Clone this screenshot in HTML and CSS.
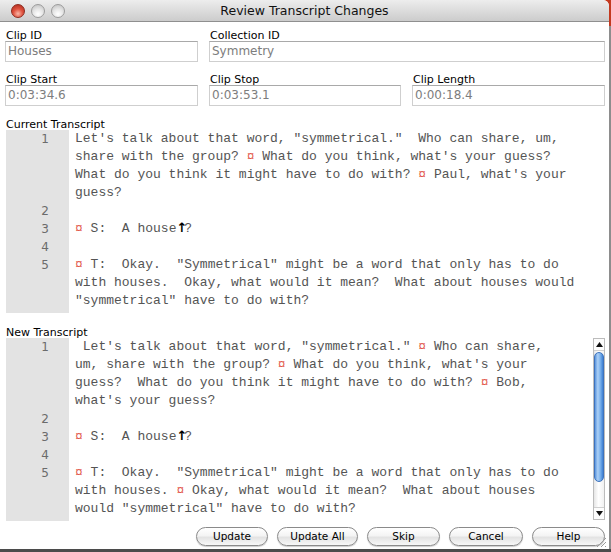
FILE: index.html
```html
<!DOCTYPE html>
<html>
<head>
<meta charset="utf-8">
<title>Review Transcript Changes</title>
<link rel="stylesheet" href="styles.css">
</head>
<body>
<div class="window">
  <div class="titlebar">
    <div class="lights">
      <span class="light red"></span>
      <span class="light"></span>
      <span class="light"></span>
    </div>
    <div class="title">Review Transcript Changes</div>
  </div>

  <div class="content">
    <div class="row row-2">
      <div class="field">
        <div class="label">Clip ID</div>
        <div class="box">Houses</div>
      </div>
      <div class="field">
        <div class="label">Collection ID</div>
        <div class="box">Symmetry</div>
      </div>
    </div>

    <div class="row row-3">
      <div class="field">
        <div class="label">Clip Start</div>
        <div class="box">0:03:34.6</div>
      </div>
      <div class="field">
        <div class="label">Clip Stop</div>
        <div class="box">0:03:53.1</div>
      </div>
      <div class="field">
        <div class="label">Clip Length</div>
        <div class="box">0:00:18.4</div>
      </div>
    </div>

    <div class="label section">Current Transcript</div>
    <div class="txwrap">
      <div class="tx">
        <div class="line"><div class="num">1</div><div class="txt">Let's talk about that word, "symmetrical."  Who can share, um,
share with the group? <span class="mk">¤</span> What do you think, what's your guess?
What do you think it might have to do with? <span class="mk">¤</span> Paul, what's your
guess?</div></div>
        <div class="line"><div class="num">2</div><div class="txt"></div></div>
        <div class="line"><div class="num">3</div><div class="txt"><span class="mk">¤</span> S:  A house<span class="up">↑</span>?</div></div>
        <div class="line"><div class="num">4</div><div class="txt"></div></div>
        <div class="line"><div class="num">5</div><div class="txt"><span class="mk">¤</span> T:  Okay.  "Symmetrical" might be a word that only has to do
with houses.  Okay, what would it mean?  What about houses would
"symmetrical" have to do with?</div></div>
      </div>
    </div>

    <div class="label section section-new">New Transcript</div>
    <div class="txwrap">
      <div class="tx">
        <div class="line"><div class="num">1</div><div class="txt"> Let's talk about that word, "symmetrical." <span class="mk">¤</span> Who can share,
um, share with the group? <span class="mk">¤</span> What do you think, what's your
guess?  What do you think it might have to do with? <span class="mk">¤</span> Bob,
what's your guess?</div></div>
        <div class="line"><div class="num">2</div><div class="txt"></div></div>
        <div class="line"><div class="num">3</div><div class="txt"><span class="mk">¤</span> S:  A house<span class="up">↑</span>?</div></div>
        <div class="line"><div class="num">4</div><div class="txt"></div></div>
        <div class="line"><div class="num">5</div><div class="txt"><span class="mk">¤</span> T:  Okay.  "Symmetrical" might be a word that only has to do
with houses. <span class="mk">¤</span> Okay, what would it mean?  What about houses
would "symmetrical" have to do with?</div></div>
      </div>
      <div class="scroll">
        <div class="arr arr-up"><svg width="7" height="5" viewBox="0 0 7 5"><polygon points="3.5,0 7,5 0,5" fill="#111"/></svg></div>
        <div class="thumb"></div>
        <div class="track"></div>
        <div class="arr arr-down"><svg width="7" height="5" viewBox="0 0 7 5"><polygon points="0,0 7,0 3.5,5" fill="#111"/></svg></div>
      </div>
    </div>

    <div class="buttons">
      <div class="btn b-update">Update</div>
      <div class="btn b-all">Update All</div>
      <div class="btn b-skip">Skip</div>
      <div class="btn b-cancel">Cancel</div>
      <div class="btn b-help">Help</div>
    </div>
  </div>

  <svg class="grip" width="12" height="12" viewBox="0 0 12 12">
    <line x1="11" y1="2" x2="2" y2="11" stroke="#9a9a9a" stroke-width="1"/>
    <line x1="11" y1="6" x2="6" y2="11" stroke="#9a9a9a" stroke-width="1"/>
    <line x1="11" y1="10" x2="10" y2="11" stroke="#9a9a9a" stroke-width="1"/>
  </svg>
</div>
</body>
</html>
```

FILE: styles.css
```css
html, body {
  margin: 0;
  padding: 0;
}
body {
  width: 611px;
  height: 552px;
  overflow: hidden;
  font-family: "DejaVu Sans", "Liberation Sans", sans-serif;
  background: linear-gradient(to bottom, #c3391f 0, #c3391f 26px, #8d8d8d 26px, #8d8d8d 549px, #4b4b4b 549px);
}
.window {
  position: relative;
  width: 609px;
  height: 549px;
  background: #ffffff;
  border-radius: 0 6px 0 0;
  overflow: hidden;
}
.titlebar {
  height: 21px;
  border-bottom: 1px solid #8f8f8f;
  background: linear-gradient(to bottom, #ededed, #d9d9d9 60%, #cccccc);
  display: grid;
  align-items: center;
}
.lights, .title {
  grid-area: 1 / 1;
}
.lights {
  justify-self: start;
  display: flex;
  gap: 6px;
  padding-left: 11px;
}
.light {
  width: 14px;
  height: 14px;
  box-sizing: border-box;
  border-radius: 50%;
  border: 1px solid #9c9c9c;
  background: radial-gradient(circle at 50% 75%, #ffffff 0, #e6e6e6 45%, #bdbdbd 100%);
}
.light.red {
  border-color: #8e2a1e;
  background: radial-gradient(circle at 50% 72%, #f9b7a8 0, #e0523f 45%, #a8281a 100%);
}
.title {
  justify-self: center;
  font-size: 12.5px;
  line-height: 21px;
  color: #111;
}
.content {
  padding: 6px 4px 0 5px;
}
.row {
  display: grid;
  column-gap: 11px;
}
.row-2 {
  grid-template-columns: 193px 1fr;
}
.row-3 {
  grid-template-columns: 193px 192px 1fr;
  margin-top: 10px;
}
.label {
  font-size: 11px;
  line-height: 13px;
  height: 13px;
  padding-top: 1px;
  box-sizing: border-box;
  color: #000;
  padding-left: 1px;
}
.box {
  height: 21px;
  box-sizing: border-box;
  border: 1px solid #cfcfcf;
  border-top-color: #a9a9a9;
  background: #fff;
  font-size: 12px;
  line-height: 19px;
  color: #7d7d7d;
  padding-left: 2px;
}
.section {
  margin-top: 11px;
}
.section-new {
  margin-top: 12px;
}
.txwrap {
  display: flex;
  margin-left: 1px;
  height: 183px;
}
.tx {
  flex: 1;
  background: linear-gradient(to right, #e3e3e3 0, #e3e3e3 63px, #ffffff 63px);
}
.line {
  display: flex;
  min-height: 18px;
}
.num {
  width: 63px;
  flex: none;
  box-sizing: border-box;
  padding-right: 20px;
  text-align: right;
  font-size: 12px;
  line-height: 18px;
  color: #6b6b6b;
}
.txt {
  padding-left: 6px;
  white-space: pre;
  font-family: "Liberation Mono", "Courier New", monospace;
  font-size: 13px;
  line-height: 18px;
  color: #545454;
}
.mk {
  color: #e2584c;
}
.up {
  display: inline-block;
  width: 7.8px;
  text-align: center;
  font-family: "DejaVu Sans", sans-serif;
  font-size: 13px;
  line-height: 13px;
  color: #000;
  font-weight: bold;
}
.scroll {
  width: 12px;
  flex: none;
  box-sizing: border-box;
  border: 1px solid #bcbcbc;
  background: linear-gradient(to right, #e6e6e6, #ffffff 45%, #f1f1f1);
  display: flex;
  flex-direction: column;
  margin-bottom: 1px;
}
.arr {
  height: 11px;
  flex: none;
  display: flex;
  align-items: center;
  justify-content: center;
  background: #fdfdfd;
}
.arr-up {
  border-bottom: 1px solid #d0d0d0;
}
.arr-down {
  border-top: 1px solid #d0d0d0;
}
.thumb {
  height: 130px;
  flex: none;
  margin-top: 1px;
  box-sizing: border-box;
  border: 1px solid #3d72bd;
  border-radius: 5px;
  background: linear-gradient(to right, #5b95dd 0, #acd0f6 35%, #7cb2ec 65%, #3d7fd3 100%);
}
.track {
  flex: 1;
}
.buttons {
  display: flex;
  justify-content: flex-end;
  gap: 9px;
  margin-top: 6px;
  padding-right: 0;
}
.btn {
  height: 19px;
  box-sizing: border-box;
  border: 1px solid #8a8a8a;
  border-radius: 10px;
  background: linear-gradient(to bottom, #ffffff 0, #f4f4f4 45%, #e3e3e3 55%, #f7f7f7 100%);
  box-shadow: 0 1px 1px rgba(0, 0, 0, 0.2);
  font-size: 10.5px;
  line-height: 17px;
  text-align: center;
  color: #000;
}
.b-update { width: 72px; }
.b-all { width: 81px; }
.b-skip { width: 73px; }
.b-cancel { width: 74px; }
.b-help { width: 73px; }
.grip {
  position: absolute;
  right: 2px;
  bottom: 1px;
}
```
